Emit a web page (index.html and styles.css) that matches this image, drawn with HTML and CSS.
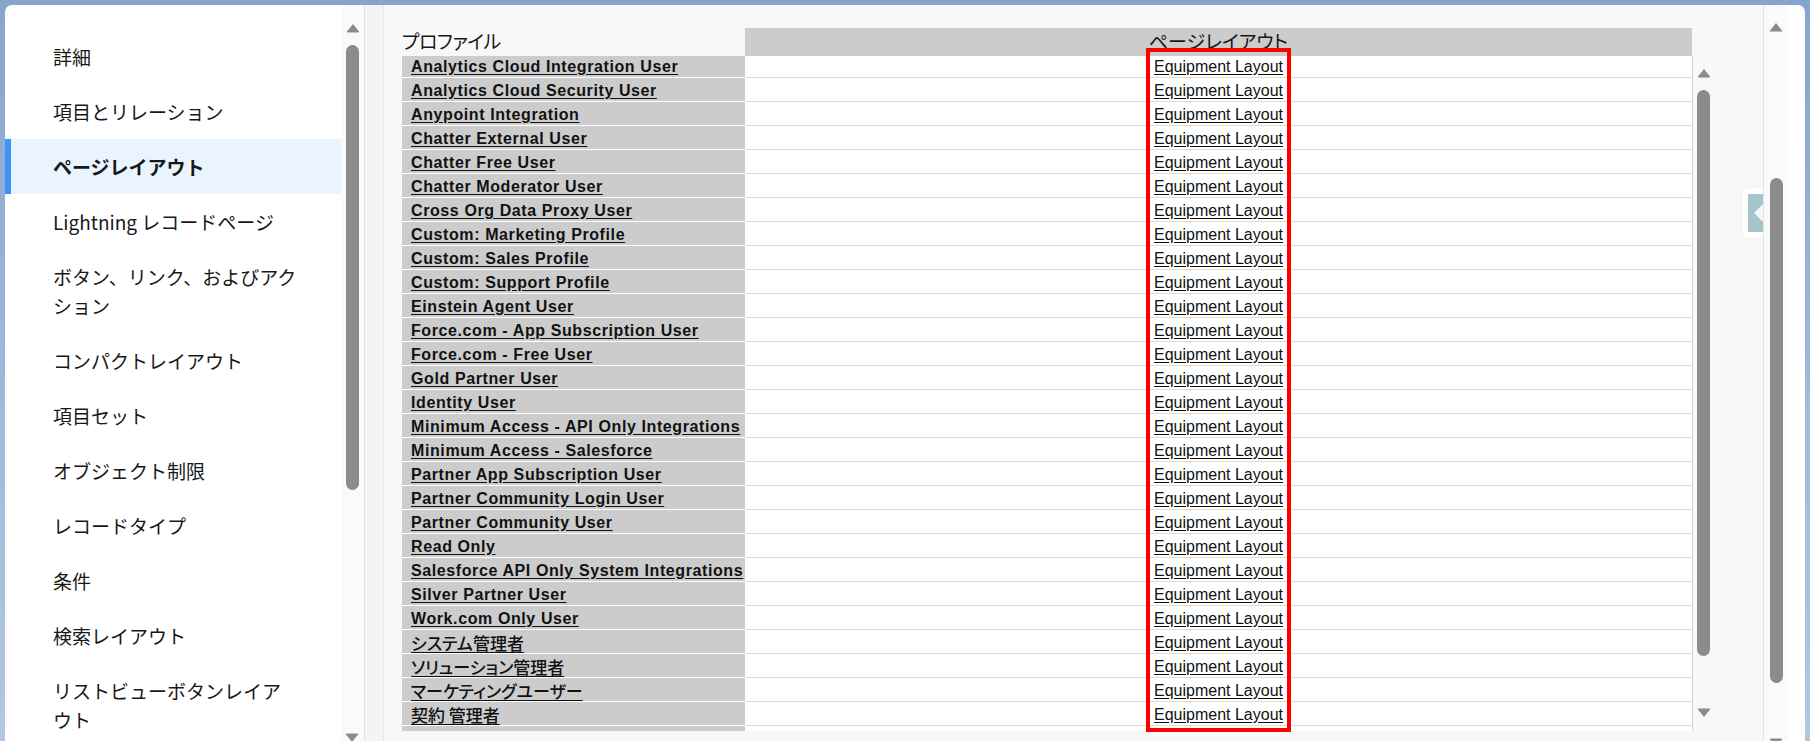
FILE: index.html
```html
<!DOCTYPE html>
<html lang="ja">
  <head>
    <meta charset="UTF-8" />
    <meta name="viewport" content="width=device-width, initial-scale=1.0" />
    <title>ページレイアウト割り当て</title>
    <link rel="stylesheet" href="styles.css">
  </head>
  <body>
    <div class="frame">
      <div class="panel">
        <!-- 左メニュー -->
        <aside class="sidebar">
          <ul class="nav">
            <li>詳細</li>
            <li>項目とリレーション</li>
            <li class="valgt">ページレイアウト</li>
            <li>Lightning レコードページ</li>
            <li>ボタン、リンク、およびアクション</li>
            <li>コンパクトレイアウト</li>
            <li>項目セット</li>
            <li>オブジェクト制限</li>
            <li>レコードタイプ</li>
            <li>条件</li>
            <li>検索レイアウト</li>
            <li>リストビューボタンレイア<br>ウト</li>
          </ul>
          <div class="track">
            <svg class="arrow" viewBox="0 0 14 10"><path d="M7 1 L13 8.5 Q13.5 9.5 12.2 9.5 L1.8 9.5 Q0.5 9.5 1 8.5 Z" /></svg>
            <div class="thumb nav-thumb"></div>
            <svg class="arrow arrow-bottom" viewBox="0 0 14 10"><path d="M7 1 L13 8.5 Q13.5 9.5 12.2 9.5 L1.8 9.5 Q0.5 9.5 1 8.5 Z" /></svg>
          </div>
        </aside>
        <div class="strip"></div>

        <main class="main">
          <div class="content">
            <div class="table">
              <div class="thead">
                <div class="th th-profil">プロファイル</div>
                <div class="th th-layout">ページレイアウト</div>
              </div>
              <div class="tbody">
                <div class="rows">
                  <div class="row"><a class="profil">Analytics Cloud Integration User</a><span class="layout"><a>Equipment Layout</a></span></div>
                  <div class="row"><a class="profil">Analytics Cloud Security User</a><span class="layout"><a>Equipment Layout</a></span></div>
                  <div class="row"><a class="profil">Anypoint Integration</a><span class="layout"><a>Equipment Layout</a></span></div>
                  <div class="row"><a class="profil">Chatter External User</a><span class="layout"><a>Equipment Layout</a></span></div>
                  <div class="row"><a class="profil">Chatter Free User</a><span class="layout"><a>Equipment Layout</a></span></div>
                  <div class="row"><a class="profil">Chatter Moderator User</a><span class="layout"><a>Equipment Layout</a></span></div>
                  <div class="row"><a class="profil">Cross Org Data Proxy User</a><span class="layout"><a>Equipment Layout</a></span></div>
                  <div class="row"><a class="profil">Custom: Marketing Profile</a><span class="layout"><a>Equipment Layout</a></span></div>
                  <div class="row"><a class="profil">Custom: Sales Profile</a><span class="layout"><a>Equipment Layout</a></span></div>
                  <div class="row"><a class="profil">Custom: Support Profile</a><span class="layout"><a>Equipment Layout</a></span></div>
                  <div class="row"><a class="profil">Einstein Agent User</a><span class="layout"><a>Equipment Layout</a></span></div>
                  <div class="row"><a class="profil">Force.com - App Subscription User</a><span class="layout"><a>Equipment Layout</a></span></div>
                  <div class="row"><a class="profil">Force.com - Free User</a><span class="layout"><a>Equipment Layout</a></span></div>
                  <div class="row"><a class="profil">Gold Partner User</a><span class="layout"><a>Equipment Layout</a></span></div>
                  <div class="row"><a class="profil">Identity User</a><span class="layout"><a>Equipment Layout</a></span></div>
                  <div class="row"><a class="profil">Minimum Access - API Only Integrations</a><span class="layout"><a>Equipment Layout</a></span></div>
                  <div class="row"><a class="profil">Minimum Access - Salesforce</a><span class="layout"><a>Equipment Layout</a></span></div>
                  <div class="row"><a class="profil">Partner App Subscription User</a><span class="layout"><a>Equipment Layout</a></span></div>
                  <div class="row"><a class="profil">Partner Community Login User</a><span class="layout"><a>Equipment Layout</a></span></div>
                  <div class="row"><a class="profil">Partner Community User</a><span class="layout"><a>Equipment Layout</a></span></div>
                  <div class="row"><a class="profil">Read Only</a><span class="layout"><a>Equipment Layout</a></span></div>
                  <div class="row"><a class="profil">Salesforce API Only System Integrations</a><span class="layout"><a>Equipment Layout</a></span></div>
                  <div class="row"><a class="profil">Silver Partner User</a><span class="layout"><a>Equipment Layout</a></span></div>
                  <div class="row"><a class="profil">Work.com Only User</a><span class="layout"><a>Equipment Layout</a></span></div>
                  <div class="row"><a class="profil jp">システム管理者</a><span class="layout"><a>Equipment Layout</a></span></div>
                  <div class="row"><a class="profil jp">ソリューション管理者</a><span class="layout"><a>Equipment Layout</a></span></div>
                  <div class="row"><a class="profil jp">マーケティングユーザー</a><span class="layout"><a>Equipment Layout</a></span></div>
                  <div class="row"><a class="profil jp">契約 管理者</a><span class="layout"><a>Equipment Layout</a></span></div>
                  <div class="row"><a class="profil jp">標準 Platform ユーザー</a><span class="layout"><a>Equipment Layout</a></span></div>
                </div>
              </div>
            </div>
            <div class="tscroll">
              <svg class="arrow" viewBox="0 0 14 10"><path d="M7 1 L13 8.5 Q13.5 9.5 12.2 9.5 L1.8 9.5 Q0.5 9.5 1 8.5 Z" /></svg>
              <div class="thumb table-thumb"></div>
              <svg class="arrow arrow-down" viewBox="0 0 14 10"><path d="M7 1 L13 8.5 Q13.5 9.5 12.2 9.5 L1.8 9.5 Q0.5 9.5 1 8.5 Z" /></svg>
            </div>
          </div>

          <!-- markering -->
          <div class="highlight"></div>
          <div class="handle"><span class="handle-inner"></span></div>
        </main>

        <div class="outer">
          <div class="outer-track">
            <svg class="arrow" viewBox="0 0 14 10"><path d="M7 1 L13 8.5 Q13.5 9.5 12.2 9.5 L1.8 9.5 Q0.5 9.5 1 8.5 Z" /></svg>
            <div class="thumb outer-thumb"></div>
            <svg class="arrow arrow-bottom" viewBox="0 0 14 10"><path d="M7 1 L13 8.5 Q13.5 9.5 12.2 9.5 L1.8 9.5 Q0.5 9.5 1 8.5 Z" /></svg>
          </div>
        </div>
      </div>
    </div>
  </body>
</html>
```

FILE: styles.css
```css
html,
body {
  margin: 0;
  height: 741px;
  overflow: hidden;
}

body {
  background: linear-gradient(180deg, #86a5cd 0%, #a4bbdc 60%, #b3c6e2 100%);
  color: #181818;
}

.frame {
  padding: 5px 0 0 5px;
  height: 736px;
}

.panel {
  width: 1800px;
  height: 760px;
  background-color: white;
  border-radius: 7px 7px 0 0;
  display: flex;
  overflow: hidden;
}

/* sidebar */
.sidebar {
  display: flex;
  border-right: 1px solid #e2e2e2;
}

.nav {
  width: 336px;
  margin: 0;
  padding: 24px 0 0 0;
  list-style: none;
  font-family: "Noto Sans CJK JP", sans-serif;
  font-size: 19px;
  line-height: 29px;
}

.nav li {
  padding: 13px 30px 13px 48px;
}

.nav li.valgt {
  background-color: #eaf4fe;
  border-left: 6px solid #3d94f6;
  padding-left: 42px;
  font-weight: bold;
}

.track {
  width: 23px;
  background-color: #fafafa;
  display: flex;
  flex-direction: column;
  align-items: center;
  padding-top: 18px;
  position: relative;
}

.arrow {
  width: 14px;
  height: 10px;
  fill: #8b8b8b;
  display: block;
}

.arrow-bottom {
  position: absolute;
  top: 728px;
  left: 4px;
  transform: rotate(180deg);
}

.thumb {
  width: 13px;
  background-color: #8b8b8b;
  border-radius: 7px;
}

.nav-thumb {
  margin-top: 12px;
  height: 445px;
}

.strip {
  width: 18px;
  background-color: #f4f4f4;
}

/* main */
.main {
  width: 1379px;
  background-color: #f8f8f8;
  border-left: 1px solid #e6e6e6;
  position: relative;
  overflow: hidden;
}

.content {
  display: flex;
  padding: 23px 0 0 18px;
}

.table {
  width: 1290px;
  font-family: "Liberation Sans", "Noto Sans CJK JP", sans-serif;
  font-size: 16px;
}

.thead {
  display: flex;
  height: 28px;
}

.th {
  font-family: "Noto Sans CJK JP", sans-serif;
  font-size: 19px;
  line-height: 25px;
  white-space: nowrap;
  font-feature-settings: "palt";
}

.th-profil {
  width: 343px;
  letter-spacing: -0.5px;
}

.th-layout {
  flex: 1;
  background-color: #cccccc;
  text-align: center;
}

.tbody {
  height: 675px;
  overflow: hidden;
  background-color: white;
}

.rows {
  margin-top: -2px;
}

.row {
  display: flex;
  height: 24px;
}

.profil {
  width: 334px;
  padding: 2px 0 0 9px;
  box-sizing: content-box;
  height: 21px;
  line-height: 21px;
  background-color: #cccccc;
  border-bottom: 1px solid white;
  font-weight: bold;
  letter-spacing: 0.6px;
  text-decoration: underline;
  text-underline-offset: 2px;
  white-space: nowrap;
  overflow: hidden;
  color: #111;
}

.profil.jp {
  font-family: "Noto Sans CJK JP", sans-serif;
  font-size: 17px;
  font-weight: 500;
  letter-spacing: 0;
  font-feature-settings: "palt";
}

.layout {
  flex: 1;
  text-align: center;
  padding-top: 2px;
  height: 21px;
  line-height: 21px;
  border-bottom: 1px solid #e2dcc2;
}

.layout a {
  color: #111;
  text-decoration: underline;
  text-underline-offset: 2px;
}

.tscroll {
  width: 22px;
  margin-top: 28px;
  height: 675px;
  border-left: 1px solid #d3d3d3;
  display: flex;
  flex-direction: column;
  align-items: center;
  padding-top: 12px;
  box-sizing: border-box;
  position: relative;
}

.table-thumb {
  margin-top: 12px;
  height: 566px;
}

.arrow-down {
  position: absolute;
  top: 652px;
  left: 4px;
  transform: rotate(180deg);
}

.highlight {
  position: absolute;
  left: 762px;
  top: 43px;
  width: 137px;
  height: 676px;
  border: 4px solid #ff0000;
}

.handle {
  position: absolute;
  right: -6px;
  top: 183px;
  width: 15px;
  height: 38px;
  padding: 6px;
  background-color: white;
  border-radius: 6px;
  box-shadow: 0 0 2px rgba(0, 0, 0, 0.08);
}

.handle-inner {
  display: block;
  height: 38px;
  background-color: #a6c4ce;
  position: relative;
}

.handle-inner::after {
  content: "";
  position: absolute;
  left: 6px;
  top: 10px;
  border-right: 9px solid #f4f8f9;
  border-top: 9px solid transparent;
  border-bottom: 9px solid transparent;
}

/* outer scroll */
.outer {
  width: 41px;
  border-left: 1px solid #e4e4e4;
  display: flex;
}

.outer-track {
  width: 24px;
  background-color: #fafafa;
  display: flex;
  flex-direction: column;
  align-items: center;
  padding-top: 17px;
  position: relative;
}

.outer-thumb {
  margin-top: 146px;
  height: 505px;
}

.outer-track .arrow-bottom {
  top: 733px;
  left: 5px;
}
```
